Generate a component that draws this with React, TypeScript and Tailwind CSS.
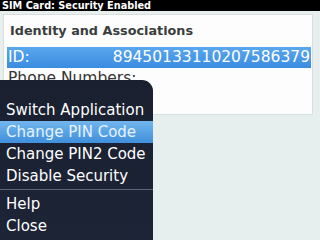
import React from 'react';

const menuItems = [
  { label: 'Switch Application', active: false },
  { label: 'Change PIN Code', active: true },
  { label: 'Change PIN2 Code', active: false },
  { label: 'Disable Security', active: false },
];

const MenuRow: React.FC<{ label: string; active?: boolean }> = ({ label, active }) => (
  <div
    className={`h-[22px] pl-[6px] leading-[22px] whitespace-nowrap ${
      active ? 'bg-gradient-to-b from-[#72b6ee] to-[#3f8fdc] text-[#e6f3ff]' : 'text-white'
    }`}
  >
    {label}
  </div>
);

export default function App() {
  return (
    <div
      className="relative w-[320px] h-[240px] overflow-hidden bg-[#e6eeee]"
      style={{ fontFamily: '"DejaVu Sans", "Liberation Sans", sans-serif' }}
    >
      <div
        className="h-[11px] bg-black pl-[2px] text-[10.8px] leading-[11px] font-bold text-white whitespace-nowrap"
        style={{ fontFamily: '"DejaVu Sans Condensed", "DejaVu Sans", sans-serif' }}
      >
        SIM Card: Security Enabled
      </div>

      <div className="mx-[3px] mt-[3px] mr-[7px] h-[101px] border border-[#d8dfdf] bg-[#fcfdfc]">
        <div className="pt-[8px] pl-[6px] h-[23px] text-[12.8px] leading-[15px] font-bold text-[#3a3d3d] whitespace-nowrap">
          Identity and Associations
        </div>
        <div className="mt-[9px] ml-[3px] mr-[1px] h-[21px] flex justify-between items-center px-[1px] bg-gradient-to-b from-[#5aa7ee] to-[#3a8ce0] text-[15.5px] leading-[21px] text-white">
          <span>ID:</span>
          <span>89450133110207586379</span>
        </div>
        <div className="ml-[4px] h-[21px] text-[15.5px] leading-[21px] text-[#333]">Phone Numbers:</div>
      </div>

      <div className="absolute left-0 top-[80px] w-[153px] h-[160px] rounded-tr-[11px] bg-gradient-to-b from-[#1a2030] to-[#1c2436] pt-[19px] text-[15px]">
        {menuItems.map((item) => (
          <MenuRow key={item.label} label={item.label} active={item.active} />
        ))}
        <div className="mt-[2px] h-[1px] bg-[#5d6474]" />
        <div className="mt-[3px]">
          <MenuRow label="Help" />
          <MenuRow label="Close" />
        </div>
      </div>
    </div>
  );
}
